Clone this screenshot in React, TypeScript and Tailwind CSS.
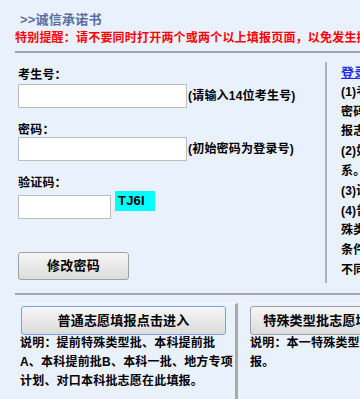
function Login() {
  const tips = [
    "(1)考生登录号为14位考生号，初始",
    "密码为考生号，首次登录后请修改密码，",
    "报志愿前请仔细阅读诚信承诺书。",
    "(2)如忘记密码，请与所在报名点联",
    "系。",
    "(3)请在规定时间内完成志愿填报。",
    "(4)普通类考生请点击普通志愿填报；特",
    "殊类型批次考生请确认自己符合报考",
    "条件后再进入特殊类型批志愿填报，",
    "不同批次志愿请分别填报。",
  ];

  return (
    <div className="w-[360px] h-[399px] overflow-hidden bg-[#e9f1fd] font-['Liberation_Sans','Noto_Sans_CJK_SC',sans-serif] text-black tracking-[0.2px]">
      <div className="w-[640px] pl-[15px]">
        <div className="pt-[10px] pl-[5px] text-[13px] leading-[20px] font-bold text-[#5a6d9c]">
          &gt;&gt;诚信承诺书
        </div>
        <div className="text-[12px] leading-[16px] font-bold text-[#ff0000] whitespace-nowrap">
          特别提醒：请不要同时打开两个或两个以上填报页面，以免发生操作错误。
        </div>
        <div className="mt-[5px] h-[2px] bg-[#a4a4a4]"></div>

        <div className="mt-[9px] flex h-[221px]">
          <div className="w-[310px] pl-[3px] pt-[6px] text-[12px] font-bold">
            <div className="leading-[14px]">考生号：</div>
            <div className="mt-[2px] flex items-center">
              <input className="w-[169px] h-[24px] bg-white border border-[#bdbdbd] outline-none" />
              <span className="ml-[1px]">(请输入14位考生号)</span>
            </div>

            <div className="mt-[15px] leading-[14px]">密码：</div>
            <div className="flex items-center">
              <input type="password" className="w-[169px] h-[24px] bg-white border border-[#bdbdbd] outline-none" />
              <span className="ml-[1px]">(初始密码为登录号)</span>
            </div>

            <div className="mt-[15px] leading-[14px]">验证码：</div>
            <div className="mt-[1px] flex items-start">
              <input className="mt-[4px] w-[93px] h-[24px] bg-white border border-[#bdbdbd] outline-none" />
              <div className="ml-[4px] w-[40px] h-[20px] bg-[#00ffff] pl-[3px] text-[13px] leading-[20px] font-bold">
                TJ6I
              </div>
            </div>

            <button className="mt-[33px] w-[111px] h-[28px] rounded-[3px] border border-[#a0a0a0] bg-gradient-to-b from-[#f6f6f6] to-[#dcdcdc] text-[13px] font-bold">
              修改密码
            </button>
          </div>

          <div className="border-l-2 border-[#b0b0b0] pl-[14px] pt-[1px] text-[12px] leading-[19.8px] font-bold whitespace-nowrap">
            <div className="text-[13px] text-[#1f2cf0] underline">登录说明</div>
            {tips.map((t) => (
              <div key={t}>{t}</div>
            ))}
          </div>
        </div>

        <div className="mt-[10px] h-[2px] bg-[#a8a8a8]"></div>

        <div className="mt-[8px] flex">
          <div className="w-[223px] h-[100px] border-t border-[#f7faff] border-r-[3px] border-r-[#a9a9a9] pl-[5px] pt-[2px]">
            <button className="ml-[1px] w-[205px] h-[29px] rounded-[3px] border border-[#7aa4d8] bg-gradient-to-b from-[#f6f6f6] to-[#dcdcdc] text-[13px] font-bold">
              普通志愿填报点击进入
            </button>
            <div className="mt-[-1px] w-[214px] text-[12px] leading-[19px] font-bold">
              说明：提前特殊类型批、本科提前批A、本科提前批B、本科一批、地方专项计划、对口本科批志愿在此填报。
            </div>
          </div>

          <div className="ml-[5px] w-[223px] h-[100px] border-t border-[#f7faff] pl-[7px] pt-[2px]">
            <button className="w-[198px] h-[29px] rounded-[3px] border border-[#a0a0a0] bg-gradient-to-b from-[#f6f6f6] to-[#dcdcdc] text-[13px] font-bold whitespace-nowrap">
              特殊类型批志愿填报点击进入
            </button>
            <div className="mt-[-1px] w-[214px] text-[12px] leading-[19px] font-bold">
              说明：本一特殊类型批次志愿在此填报。
            </div>
          </div>
        </div>
      </div>
    </div>
  );
}

export default function App() {
  return <Login />;
}
